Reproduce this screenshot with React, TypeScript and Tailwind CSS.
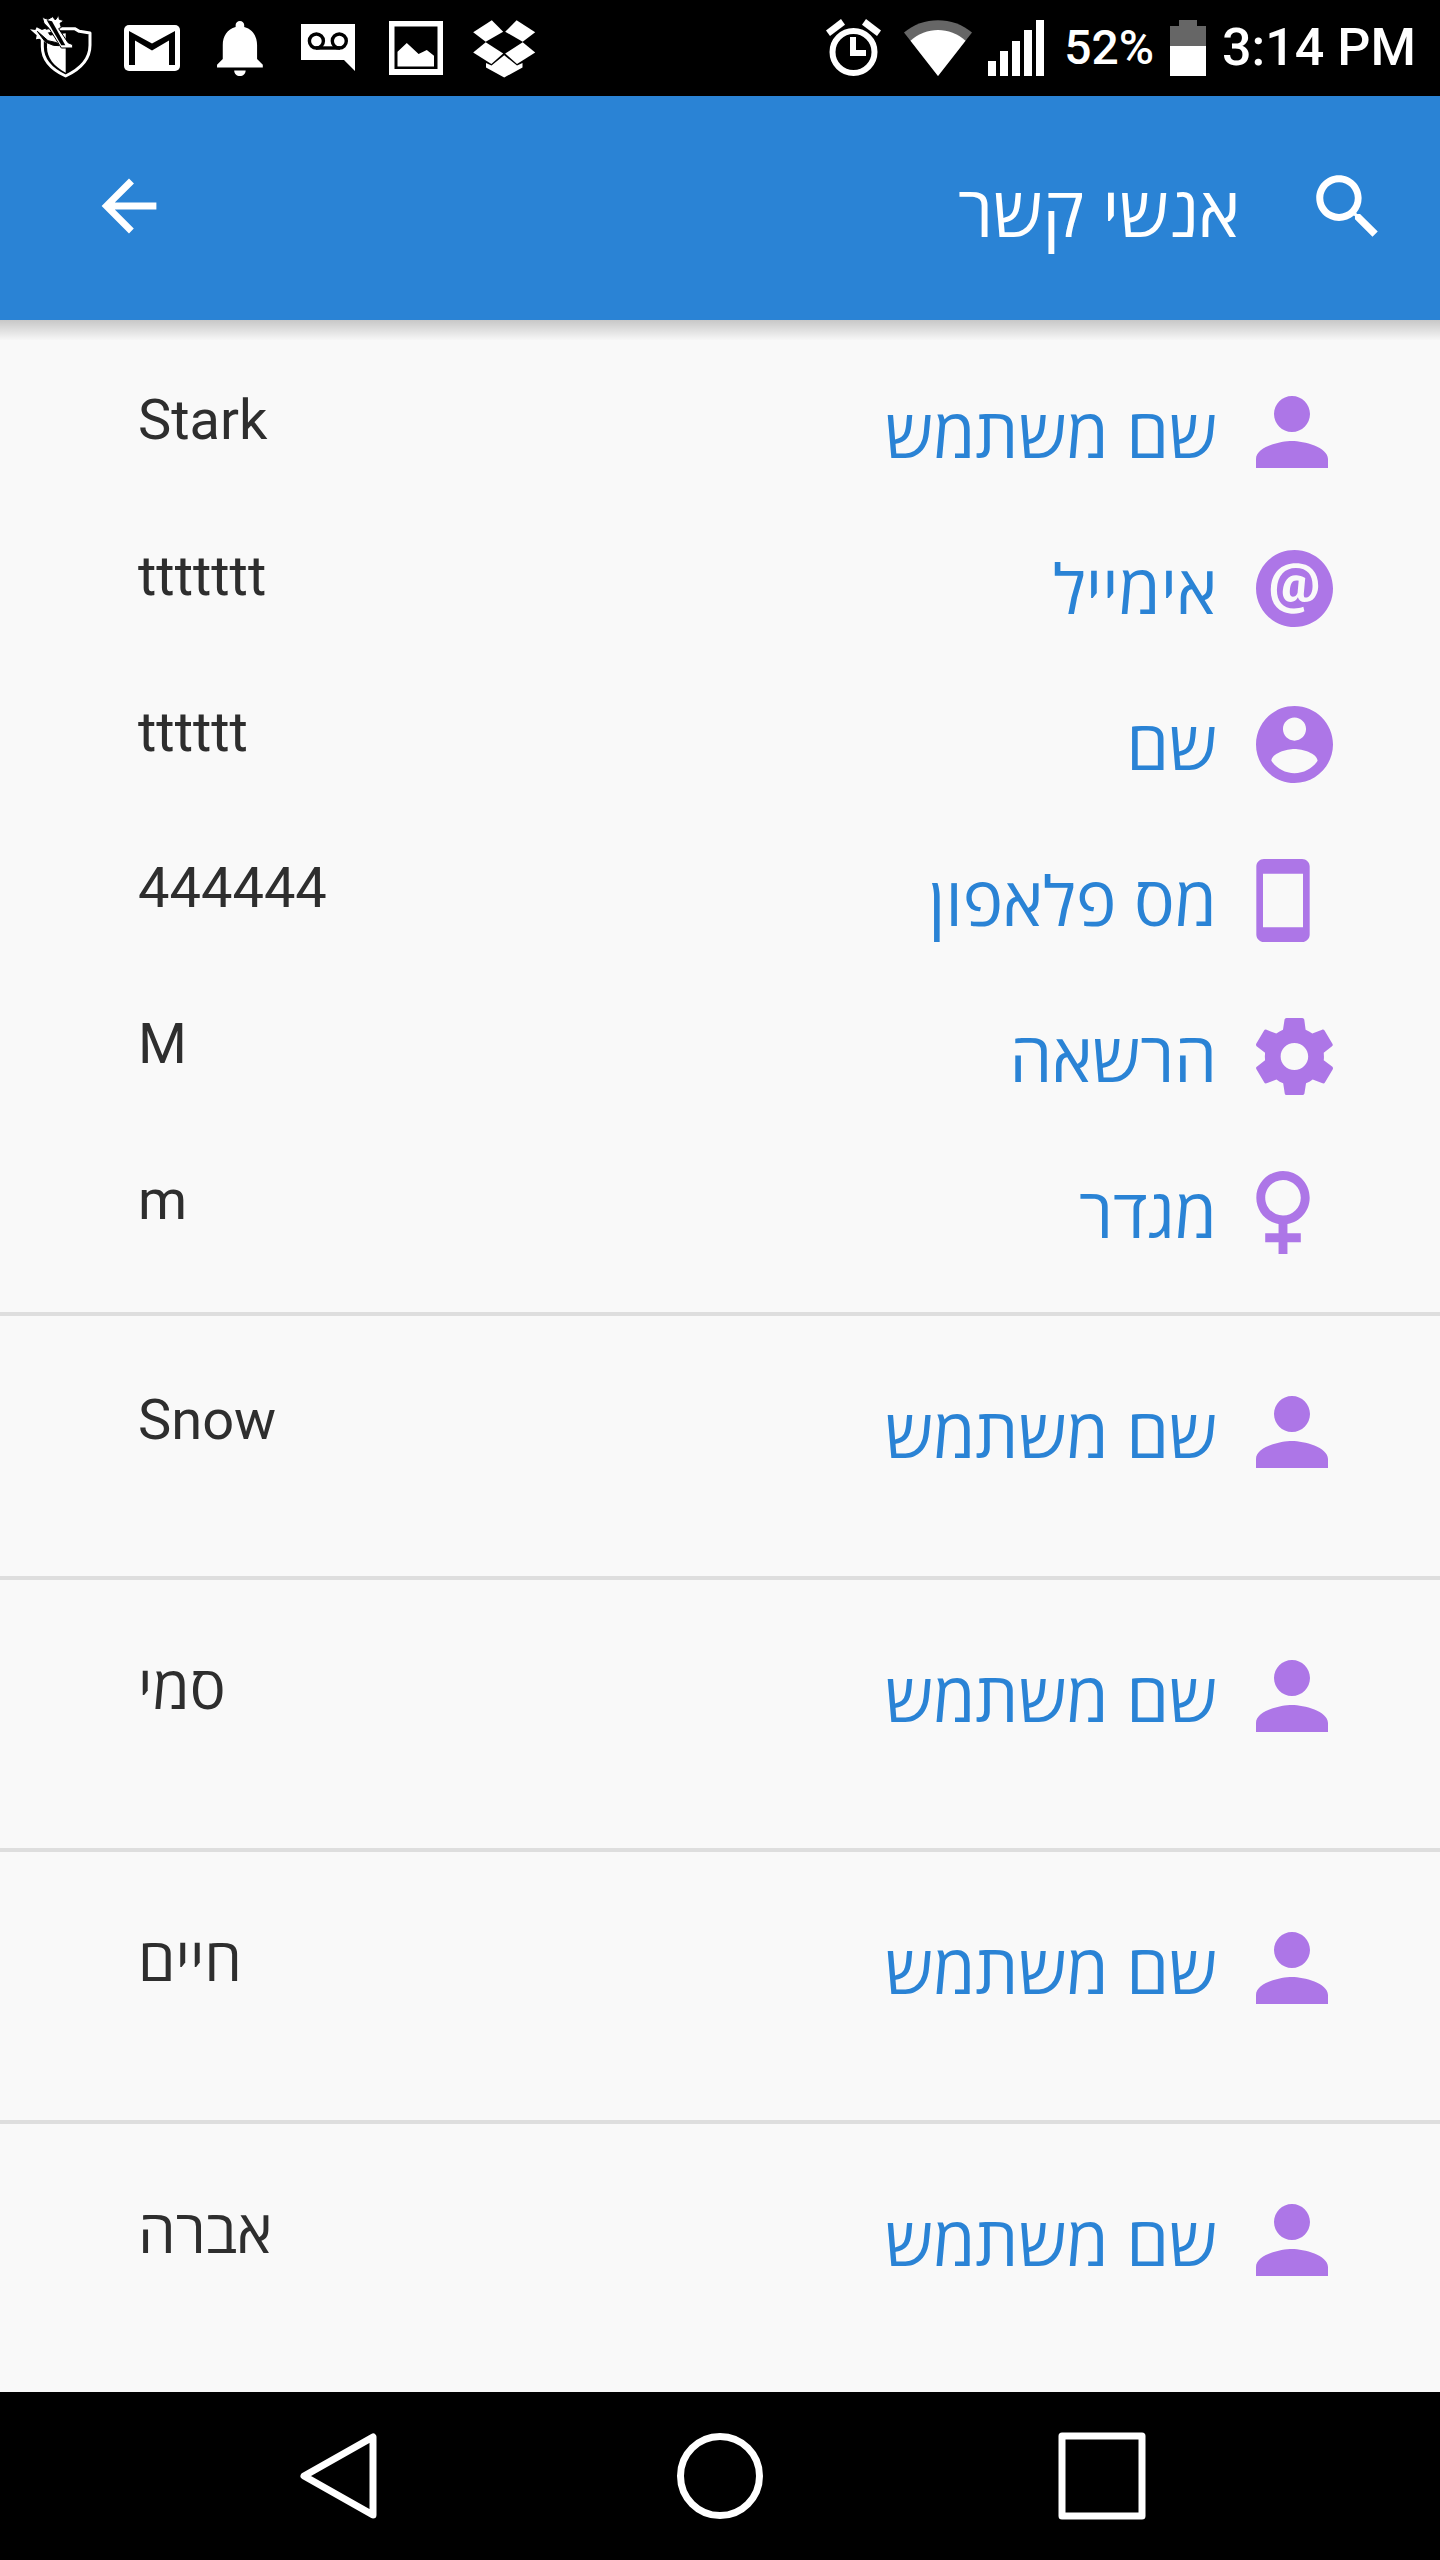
import type { ReactNode } from "react";
import type { IconType } from "react-icons";
import {
  IoMdArrowBack,
  IoMdAt,
  IoMdContact,
  IoMdFemale,
  IoMdPerson,
  IoMdPhonePortrait,
  IoMdSearch,
  IoMdSettings,
} from "react-icons/io";

/* ---------- Status bar ---------- */

function StatusIcon({ x, width, children }: { x: number; width: number; children: ReactNode }) {
  return (
    <svg
      viewBox={`${x} 0 ${width} 96`}
      width={width}
      height={96}
      fill="currentColor"
      aria-hidden="true"
      className="shrink-0"
    >
      {children}
    </svg>
  );
}

function StatusBar() {
  return (
    <div className="flex h-24 items-center justify-between bg-black pr-6 pl-7 text-white">
      <div className="flex items-center gap-4">
        {/* shield with arrows */}
        <StatusIcon x={28} width={72}>
          <g transform="translate(24 8) scale(0.3333)">
            <path
              d="M108 62H152L166 70L198 75V112C198 150 172 182 125 204C78 182 55 152 55 116V72Z"
              fill="none"
              stroke="currentColor"
              strokeWidth="9"
              strokeLinejoin="round"
            />
            <path d="M70 84L125 76V194C90 176 69 150 69 118Z" />
            <path d="M18 64L34 66L38 58L54 66L64 62L76 80L112 116L88 118L46 92L36 94L38 82Z" />
            <path d="M40 70L72 98L98 104L106 113L88 112L64 102Z" fill="#000" stroke="#000" strokeWidth="3" />
            <path
              d="M55 28L72 34L86 26L94 36L104 22L106 34L120 38L108 46L112 58L104 62L132 104L146 110L146 120L112 120L76 62L60 46Z"
              stroke="#000"
              strokeWidth="3"
            />
            <path d="M68 36L84 40L124 112H112Z" fill="#000" />
          </g>
        </StatusIcon>
        {/* mail */}
        <StatusIcon x={116} width={72}>
          <rect x="124" y="25" width="56" height="46" rx="5" />
          <path
            d="M129 31L152 43.5L175 31V65H169V40.5L152 50.5L135 40.5V65H129Z"
            fill="#000"
          />
        </StatusIcon>
        {/* bell */}
        <StatusIcon x={204} width={72}>
          <path
            transform="translate(205.6 13.8) scale(2.86 2.83)"
            d="M12 22c1.1 0 2-.9 2-2h-4c0 1.1.89 2 2 2zm6-6v-5c0-3.07-1.64-5.64-4.5-6.32V4c0-.83-.67-1.5-1.5-1.5s-1.5.67-1.5 1.5v.68C7.63 5.36 6 7.92 6 11v5l-2 2v1h16v-1l-2-2z"
          />
        </StatusIcon>
        {/* voicemail */}
        <StatusIcon x={292} width={72}>
          <path d="M301 24H355V71L344 60H301Z" />
          <g fill="none" stroke="#000" strokeWidth="3.4">
            <circle cx="316.4" cy="41" r="7" />
            <circle cx="339.3" cy="41" r="7" />
            <path d="M316 48H340" />
          </g>
        </StatusIcon>
        {/* picture */}
        <StatusIcon x={380} width={72}>
          <path
            fillRule="evenodd"
            d="M389 21H443V75H389ZM394.500 26.500V69H437.500V26.500Z"
          />
          <path d="M397.500 51.700L406.800 43L418.600 54L426.800 50L434 55.700V66.500H397.500Z" />
        </StatusIcon>
        {/* dropbox */}
        <StatusIcon x={468} width={72}>
          <path d="M491.800 20.300L503.200 31.700L485.700 41.700L473.200 32.300Z" />
          <path d="M516.600 20.300L505.200 31.700L522.700 41.700L535.200 32.300Z" />
          <path d="M485.700 42.300L503.200 53.500L491.400 64L473.200 52.500Z" />
          <path d="M522.700 42.300L505.200 53.500L517 64L535.200 52.500Z" />
          <path d="M504.200 55.200L517 65.600L522.500 63V67.500L504.200 77.500L486 67.500V63L491.500 65.600Z" />
        </StatusIcon>
      </div>

      <div className="flex items-center gap-4 font-[Roboto,sans-serif] font-medium">
        <div className="flex items-center gap-[14px]">
          {/* alarm */}
          <StatusIcon x={820} width={68}>
            <circle cx="853.500" cy="52" r="21" fill="none" stroke="currentColor" strokeWidth="6" />
            <path d="M850 37H856V50H866V56H850Z" />
            <path d="M841 19L845 24.700L830 36L826 30.500Z" />
            <path d="M866 19L862 24.700L877 36L881 30.500Z" />
          </StatusIcon>
          {/* wifi */}
          <StatusIcon x={906} width={72}>
            <path d="M942 76L908 32.500C927 16 957 16 976 32.500Z" fill="#666" />
            <path d="M942 76L914.500 40.700C930 26.500 954 26.500 969.500 40.700Z" />
          </StatusIcon>
          {/* signal */}
          <StatusIcon x={990} width={60}>
            <path d="M990 61h8v15h-8zM1002 51h8v25h-8zM1014 41h8v35h-8zM1026 30h8v46h-8zM1038 20h8v56h-8z" />
          </StatusIcon>
        </div>
        <span className="text-5xl leading-none">52%</span>
        {/* battery */}
        <StatusIcon x={1173} width={36}>
          <path d="M1182 20H1200V26H1209V46H1173V26H1182Z" fill="#666" />
          <path d="M1173 46H1209V76H1173Z" />
        </StatusIcon>
        <time className="text-[52px] leading-none whitespace-nowrap">3:14 PM</time>
      </div>
    </div>
  );
}

/* ---------- App bar ---------- */

function AppBar() {
  return (
    <header
      dir="rtl"
      className="relative z-10 flex h-56 items-center justify-between bg-[#2a83d5] px-[52px] pb-1 text-white after:absolute after:inset-x-0 after:top-full after:h-5 after:bg-linear-to-b after:from-black/20 after:to-black/1"
    >
      <div className="flex items-center gap-[66px]">
        <button type="button" aria-label="חיפוש">
          <IoMdSearch className="size-[82px]" />
        </button>
        <h1 className="pt-2 font-['Open_Sans',sans-serif] text-[70px] leading-[96px]">אנשי קשר</h1>
      </div>
      <button type="button" aria-label="חזרה" className="ml-9">
        <IoMdArrowBack className="size-[82px]" />
      </button>
    </header>
  );
}

/* ---------- Contacts ---------- */

type Field = { icon: IconType; viewBox: string; iconClass: string; label: string; value: string };

const round = { viewBox: "48 48 416 416", iconClass: "size-[77px]" };
const tall = { viewBox: "112 32 288 448", iconClass: "h-[83px] w-[54px]" };
const userName = (value: string): Field => ({
  icon: IoMdPerson,
  viewBox: "64 64 384 384",
  iconClass: "size-[72px]",
  label: "שם משתמש",
  value,
});

const contacts: Field[][] = [
  [
    userName("Stark"),
    { icon: IoMdAt, ...round, label: "אימייל", value: "ttttttt" },
    { icon: IoMdContact, ...round, label: "שם", value: "tttttt" },
    { icon: IoMdPhonePortrait, ...tall, label: "מס פלאפון", value: "444444" },
    { icon: IoMdSettings, ...round, label: "הרשאה", value: "M" },
    { icon: IoMdFemale, ...tall, label: "מגדר", value: "m" },
  ],
  [userName("Snow")],
  [userName("סמי")],
  [userName("חיים")],
  [userName("אברה")],
];

const isHebrew = (text: string) => /[\u0590-\u05ff]/.test(text);

function FieldRow({ field }: { field: Field }) {
  const Icon = field.icon;
  return (
    <div className="flex items-start justify-between">
      <dt className="flex items-center gap-[39px] text-[#2a83d5]">
        <span className="flex h-24 w-20 items-center justify-end text-[#ad76e7]">
          <Icon viewBox={field.viewBox} className={field.iconClass} />
        </span>
        <span className="font-['Open_Sans',sans-serif] text-[68px] leading-[96px]">
          {field.label}
        </span>
      </dt>
      {isHebrew(field.value) ? (
        <dd className="pb-7 font-['Open_Sans',sans-serif] text-[60px] leading-[76px]">
          {field.value}
        </dd>
      ) : (
        <dd className="pb-6 font-[Roboto,sans-serif] text-[56px] leading-[72px]">{field.value}</dd>
      )}
    </div>
  );
}

export default function App() {
  return (
    <div className="flex min-h-screen flex-col bg-[#f9f9f9]">
      <StatusBar />
      <AppBar />
      <main dir="rtl" className="flex-1 text-[#2e2e2e]">
        <ul>
          {contacts.map((fields, i) => (
            <li
              key={i}
              className="border-[#dedede] pt-[68px] pr-[104px] pb-24 pl-[138px] not-last:border-b-4 first:pt-16 first:pb-[52px] last:pb-0"
            >
              <dl className="flex flex-col gap-[60px]">
                {fields.map((field) => (
                  <FieldRow key={field.label} field={field} />
                ))}
              </dl>
            </li>
          ))}
        </ul>
      </main>
      <nav className="flex h-[168px] items-center justify-center bg-black text-white">
        <button type="button" aria-label="Back" className="flex w-[26.5%] justify-center">
          <svg viewBox="0 0 96 96" className="size-24" fill="none" stroke="currentColor" strokeWidth="7" strokeLinejoin="round">
            <path d="M83 9V87L14 48Z" />
          </svg>
        </button>
        <button type="button" aria-label="Home" className="flex w-[26.5%] justify-center">
          <svg viewBox="0 0 96 96" className="size-24" fill="none" stroke="currentColor" strokeWidth="7">
            <circle cx="48" cy="48" r="39.500" />
          </svg>
        </button>
        <button type="button" aria-label="Recent apps" className="flex w-[26.5%] justify-center">
          <svg viewBox="0 0 96 96" className="size-24" fill="none" stroke="currentColor" strokeWidth="7" strokeLinejoin="round">
            <rect x="8" y="8" width="80" height="80" />
          </svg>
        </button>
      </nav>
    </div>
  );
}
